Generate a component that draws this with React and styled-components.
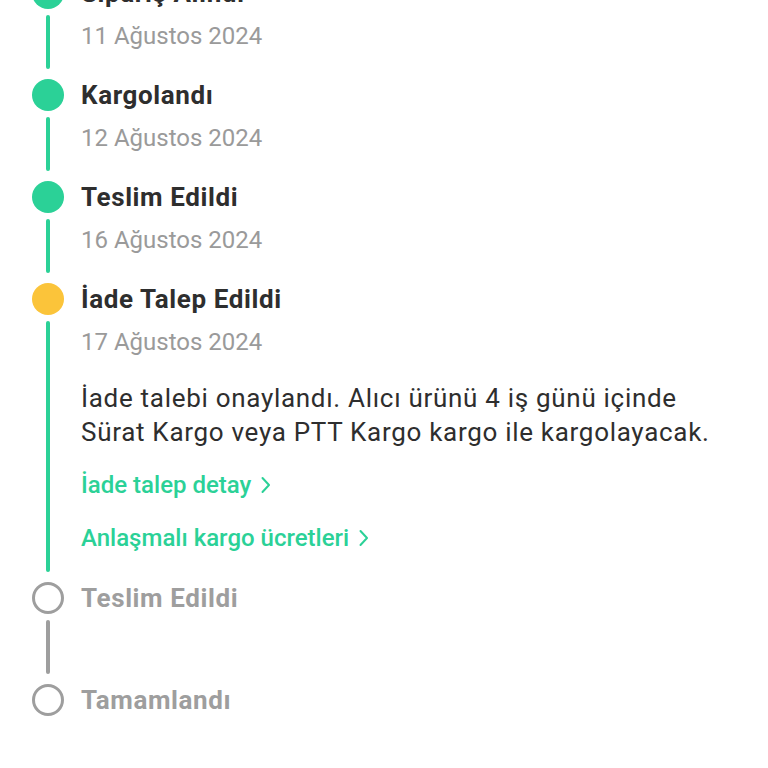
import React from 'react';
import styled, { createGlobalStyle } from 'styled-components';

const GREEN = '#2bd197';
const GOLD = '#fbc43a';
const GRAY = '#9e9e9e';

const Global = createGlobalStyle`
  html, body {
    margin: 0;
    padding: 0;
    background: #ffffff;
    font-family: Roboto, "Noto Sans", "Liberation Sans", sans-serif;
    overflow: hidden;
  }
`;

const Page = styled.div`
  width: 768px;
  height: 768px;
  overflow: hidden;
  background: #fff;
`;

const Timeline = styled.div`
  margin-top: -23px;
  padding-left: 32px;
  padding-right: 24px;
`;

const Step = styled.div`
  display: grid;
  grid-template-columns: 32px 1fr;
  column-gap: 17px;
`;

const Dot = styled.div`
  width: 32px;
  height: 32px;
  box-sizing: border-box;
  border-radius: 50%;
  background: ${p => (p.$hollow ? 'transparent' : p.$color)};
  border: ${p => (p.$hollow ? `3px solid ${p.$color}` : 'none')};
`;

const Title = styled.div`
  display: flex;
  align-items: center;
  height: 32px;
  font-size: 26px;
  font-weight: 700;
  color: ${p => (p.$muted ? GRAY : '#2e2e2e')};
  letter-spacing: 0.6px;
  white-space: nowrap;
`;

const Rail = styled.div`
  display: flex;
  justify-content: center;
  padding: 6px 0 10px;
`;

const RailLine = styled.div`
  width: 4px;
  border-radius: 2px;
  background: ${p => p.$color};
`;

const Body = styled.div`
  min-height: 70px;
  box-sizing: border-box;
  padding: 12px 0 28px;
`;

const Date = styled.div`
  font-size: 24px;
  line-height: 30px;
  color: #9a9a9a;
`;

const Desc = styled.p`
  margin: 24px 0 0;
  max-width: 640px;
  font-size: 26px;
  line-height: 34px;
  color: #2e2e2e;
  letter-spacing: 0.7px;
`;

const Links = styled.div`
  display: flex;
  flex-direction: column;
  align-items: flex-start;
  gap: 21px;
  margin-top: 20px;
`;

const Link = styled.a`
  display: flex;
  align-items: center;
  gap: 10px;
  height: 32px;
  font-size: 24px;
  font-weight: 500;
  color: ${GREEN};
  text-decoration: none;
  letter-spacing: 0;
  cursor: pointer;
`;

const Chevron = () => (
  <svg width="10" height="18" viewBox="0 0 10 18" fill="none">
    <path d="M1.5 2l6.5 7-6.5 7" stroke={GREEN} strokeWidth="2" strokeLinecap="round" strokeLinejoin="round" />
  </svg>
);

const steps = [
  { title: 'Sipariş Alındı', date: '11 Ağustos 2024', color: GREEN, line: GREEN },
  { title: 'Kargolandı', date: '12 Ağustos 2024', color: GREEN, line: GREEN },
  { title: 'Teslim Edildi', date: '16 Ağustos 2024', color: GREEN, line: GREEN },
  {
    title: 'İade Talep Edildi',
    date: '17 Ağustos 2024',
    color: GOLD,
    line: GREEN,
    desc: 'İade talebi onaylandı. Alıcı ürünü 4 iş günü içinde Sürat Kargo veya PTT Kargo kargo ile kargolayacak.',
    links: ['İade talep detay', 'Anlaşmalı kargo ücretleri'],
  },
  { title: 'Teslim Edildi', color: GRAY, line: GRAY, hollow: true },
  { title: 'Tamamlandı', color: GRAY, hollow: true, last: true },
];

export default function App() {
  return (
    <Page>
      <Global />
      <Timeline>
        {steps.map((s, i) => (
          <Step key={i}>
            <Dot $color={s.color} $hollow={s.hollow} />
            <Title $muted={s.hollow}>{s.title}</Title>
            {!s.last && (
              <>
                <Rail>
                  <RailLine $color={s.line} />
                </Rail>
                <Body>
                  {s.date && <Date>{s.date}</Date>}
                  {s.desc && <Desc>{s.desc}</Desc>}
                  {s.links && (
                    <Links>
                      {s.links.map(l => (
                        <Link key={l}>
                          {l}
                          <Chevron />
                        </Link>
                      ))}
                    </Links>
                  )}
                </Body>
              </>
            )}
          </Step>
        ))}
      </Timeline>
    </Page>
  );
}
